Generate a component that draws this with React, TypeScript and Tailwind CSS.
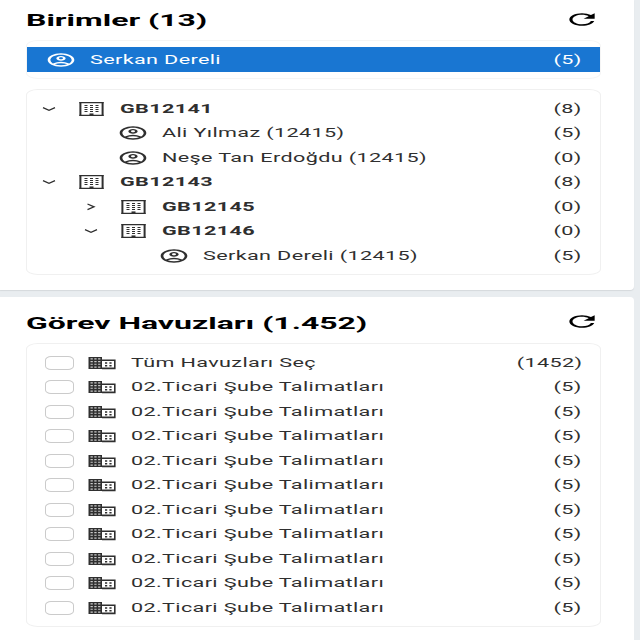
import React from "react";
import { MdOutlineAccountCircle, MdRefresh } from "react-icons/md";

type Kind = "unit" | "person";
type Node = { kind: Kind; name: string; count: number; pad: string; arrow?: "down" | "right" };

const nodes: Node[] = [
  { kind: "unit", name: "GB12141", count: 8, pad: "pl-[15px]", arrow: "down" },
  { kind: "person", name: "Ali Yılmaz (12415)", count: 5, pad: "pl-[57px]" },
  { kind: "person", name: "Neşe Tan Erdoğdu (12415)", count: 0, pad: "pl-[57px]" },
  { kind: "unit", name: "GB12143", count: 8, pad: "pl-[15px]", arrow: "down" },
  { kind: "unit", name: "GB12145", count: 0, pad: "pl-[57px]", arrow: "right" },
  { kind: "unit", name: "GB12146", count: 0, pad: "pl-[57px]", arrow: "down" },
  { kind: "person", name: "Serkan Dereli (12415)", count: 5, pad: "pl-[98px]" },
];

const pools = [
  { name: "Tüm Havuzları Seç", count: 1452 },
  ...Array.from({ length: 10 }, () => ({ name: "02.Ticari Şube Talimatları", count: 5 })),
];

function Wide({ children, className = "" }: { children: React.ReactNode; className?: string }) {
  return (
    <span className={`inline-block origin-left scale-x-[1.8] whitespace-nowrap text-[12px] leading-4 tracking-[0.2px] ${className}`}>
      {children}
    </span>
  );
}

function Count({ value }: { value: number }) {
  return (
    <span className="ml-auto inline-block origin-right scale-x-[1.8] whitespace-nowrap text-[12px] leading-4 tracking-[0.2px]">
      ({value})
    </span>
  );
}

function Chevron({ dir }: { dir?: "down" | "right" }) {
  return (
    <svg className="-ml-px mr-px h-4 w-4 shrink-0" viewBox="0 0 16 16" fill="none" stroke="currentColor" strokeWidth="1.3">
      {dir === "down" && <path d="M2 6.7L8 9.4L14 6.7" />}
      {dir === "right" && <path d="M4.5 5L11 7.8L4.5 10.6" />}
    </svg>
  );
}

function UnitIcon() {
  return (
    <svg className="ml-[21px] h-4 w-[25px] shrink-0" viewBox="0 0 25 16" fill="none">
      <path d="M1.4 1V15M23.6 1V15" stroke="currentColor" strokeWidth="2" />
      <path d="M.4 1.6H24.6M.4 14.4H24.6" stroke="currentColor" strokeWidth="1.3" />
      {[4.5, 6.5, 8.5, 10.5].map((y) => (
        <path key={y} d={`M5.5 ${y}H8.5M11 ${y}H14M16.5 ${y}H19.5`} stroke="currentColor" strokeWidth="1.1" />
      ))}
      <path d="M10.5 12.4H14.5V14.5H10.5Z" fill="currentColor" />
    </svg>
  );
}

function PoolIcon() {
  return (
    <svg className="ml-[14px] h-4 w-7 shrink-0" viewBox="0 0 28 16" fill="none">
      <path d="M.5 2H14V14H.5Z" fill="currentColor" />
      {[3.9, 6.6, 9.3, 12.1].map((y) => (
        <path key={y} d={`M2.5 ${y}H4.8M6.3 ${y}H8.6M10.1 ${y}H12.4`} stroke="white" strokeOpacity=".75" strokeWidth="1.1" />
      ))}
      <path d="M14 5.3H26.8V13.4H14" stroke="currentColor" strokeWidth="1.6" />
      <path d="M17 8H19.2M21.4 8H23.6M17 10.8H19.2M21.4 10.8H23.6" stroke="currentColor" strokeWidth="1.4" />
    </svg>
  );
}

function Header({ title, iconClass = "" }: { title: string; iconClass?: string }) {
  return (
    <div className="flex h-6 items-center justify-between">
      <h2 className="origin-left scale-x-[1.88] whitespace-nowrap text-[17px] font-bold leading-6 text-black">{title}</h2>
      <MdRefresh preserveAspectRatio="none" className={`h-[19px] w-[38px] text-black ${iconClass}`} />
    </div>
  );
}

export default function App() {
  return (
    <div className="h-[640px] w-[640px] overflow-hidden bg-[#e9edf0] font-[Roboto,sans-serif] text-[#2f2f2f]">
      <section className="h-[290px] w-[634px] rounded-br-[4px] bg-white pl-[26px] pr-[33px] pt-2 shadow-[0_1px_1px_#d5d9dc]">
        <Header title="Birimler (13)" iconClass="mb-px" />
        <div className="mt-2 h-[39px] rounded-[12px/6px] border border-[#f5f5f5] pt-[6px]">
          <div className="flex h-[25px] items-center bg-[#1976d2] pl-[18px] pr-[18px] text-white">
            <MdOutlineAccountCircle preserveAspectRatio="none" className="h-4 w-8 shrink-0" />
            <Wide className="ml-[13px]">Serkan Dereli</Wide>
            <Count value={5} />
          </div>
        </div>
        <div className="mt-[10px] h-[186px] rounded-[12px/6px] border border-[#f0f0f0] pr-[18px] pt-[6.5px]">
          {nodes.map((n, i) => (
            <div key={i} className={`flex h-[24.5px] items-center ${n.pad}`}>
              {n.kind === "unit" ? (
                <>
                  <Chevron dir={n.arrow} />
                  <UnitIcon />
                  <Wide className="ml-4 font-bold">{n.name}</Wide>
                </>
              ) : (
                <>
                  <MdOutlineAccountCircle preserveAspectRatio="none" className="ml-[33px] h-4 w-8 shrink-0" />
                  <Wide className="ml-[13px]">{n.name}</Wide>
                </>
              )}
              <Count value={n.count} />
            </div>
          ))}
        </div>
      </section>
      <section className="mt-[7px] h-[343px] w-[634px] rounded-tr-[4px] bg-white pl-[26px] pr-[33px] pt-[14px]">
        <Header title="Görev Havuzları (1.452)" iconClass="mb-[3px]" />
        <div className="mt-2 h-[284px] rounded-[12px/6px] border border-[#f0f0f0] pl-[18px] pr-[18px] pt-[6.5px]">
          {pools.map((p, i) => (
            <div key={i} className="flex h-[24.5px] items-center">
              <span className="h-[14px] w-[29px] shrink-0 rounded-[6px/4px] border border-[#cbcbcb]" />
              <PoolIcon />
              <Wide className="ml-[15px]">{p.name}</Wide>
              <Count value={p.count} />
            </div>
          ))}
        </div>
      </section>
    </div>
  );
}
